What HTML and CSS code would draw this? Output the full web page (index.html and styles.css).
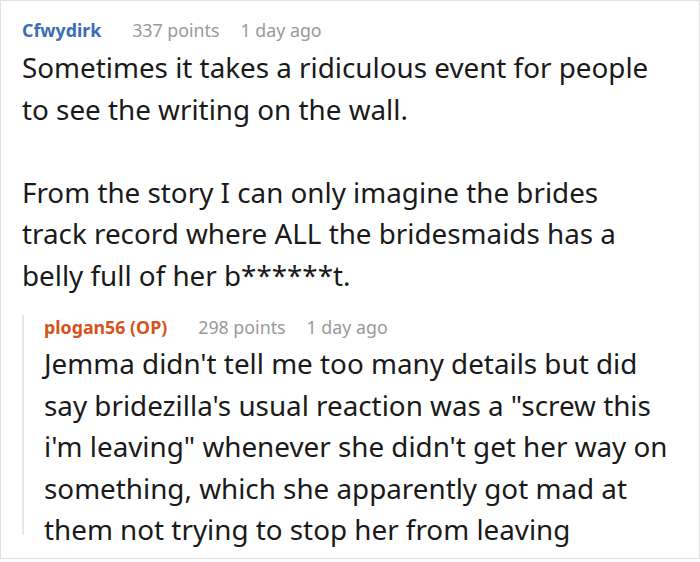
FILE: index.html
```html
<!DOCTYPE html>
<html>
<head>
<meta charset="utf-8">
<link rel="stylesheet" href="styles.css">
</head>
<body>
<div class="frame">
  <div class="comment">
    <div class="meta">
      <span class="user user-blue">Cfwydirk</span>
      <span class="points">337 points</span>
      <span class="time">1 day ago</span>
    </div>
    <div class="text">
      <p>Sometimes it takes a ridiculous event for people to see the writing on the wall.</p>
      <p>From the story I can only imagine the brides track record where ALL the bridesmaids has a belly full of her b******t.</p>
    </div>
    <div class="reply">
      <div class="meta">
        <span class="user user-op">plogan56 (OP)</span>
        <span class="points">298 points</span>
        <span class="time">1 day ago</span>
      </div>
      <div class="text">
        <p>Jemma didn't tell me too many details but did say bridezilla's usual reaction was a "screw this i'm leaving" whenever she didn't get her way on something, which she apparently got mad at them not trying to stop her from leaving</p>
      </div>
    </div>
  </div>
</div>
</body>
</html>
```
FILE: styles.css
```css
html, body {
  margin: 0;
  padding: 0;
  background: #ffffff;
}
.frame {
  width: 700px;
  height: 559px;
  box-sizing: border-box;
  border: 1px solid #e0e0e0;
  overflow: hidden;
  font-family: "Noto Sans", "DejaVu Sans", sans-serif;
}
.comment {
  padding: 17px 29px 0 21px;
}
.meta {
  display: flex;
  align-items: baseline;
  font-size: 17.8px;
  line-height: 24px;
  color: #999999;
}
.user {
  font-weight: bold;
  margin-right: 31px;
}
.user-blue { color: #3a6db4; }
.user-op { color: #d4531d; }
.points { margin-right: 21px; }
.text {
  margin-top: 5px;
  font-size: 27.8px;
  line-height: 41.5px;
  color: #1a1a1a;
}
.text p {
  margin: 0 0 41.5px 0;
}
.text p:last-child { margin-bottom: 0; }
.reply {
  margin-top: 27px;
  height: 220px;
  border-left: 2px solid #e6e6e6;
  padding-left: 20px;
}
.reply .meta {
  margin-top: -8px;
}
.reply .text { margin-top: 4px; }
```
